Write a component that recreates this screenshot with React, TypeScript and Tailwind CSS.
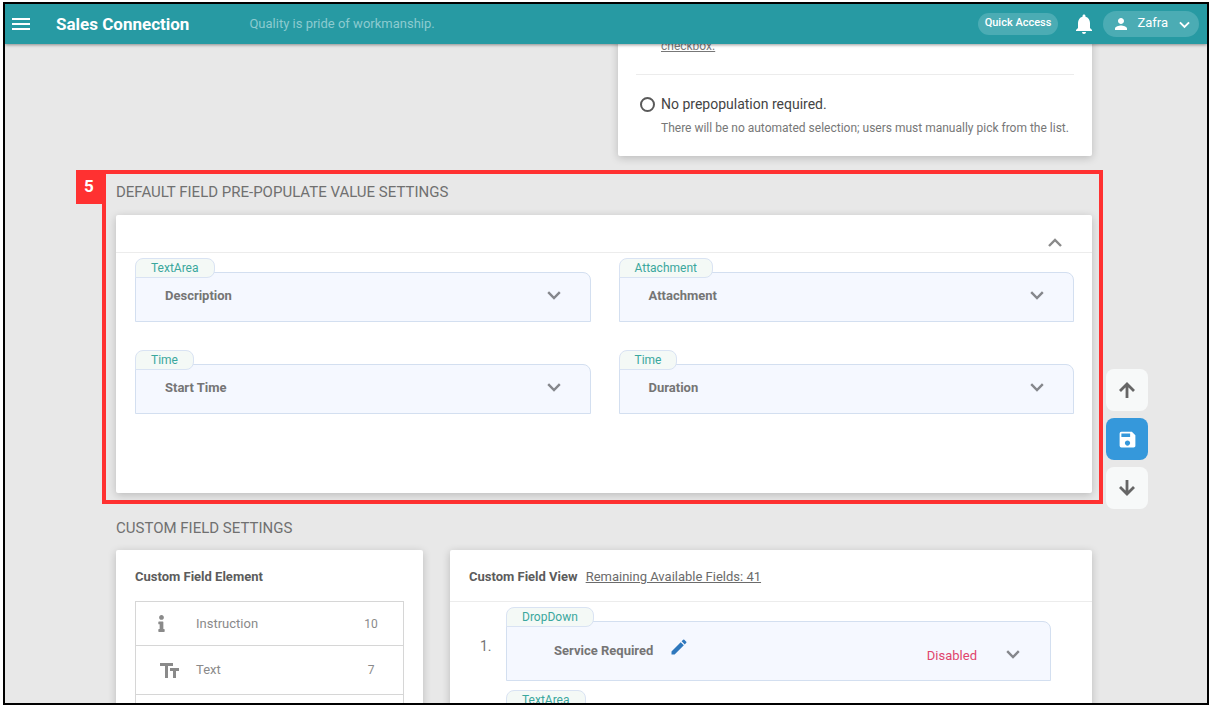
import { FaInfo } from "react-icons/fa";
import { MdEdit, MdNotifications, MdPerson, MdSave } from "react-icons/md";

const defaultFields = [
    { type: "TextArea", name: "Description" },
    { type: "Attachment", name: "Attachment" },
    { type: "Time", name: "Start Time" },
    { type: "Time", name: "Duration" },
];

const elements = [
    { name: "Instruction", count: 10, icon: "info" },
    { name: "Text", count: 7, icon: "text" },
];

function Chevron({ up, className }: { up?: boolean; className?: string }) {
    return (
        <svg viewBox="0 0 14 14" className={className} fill="none" stroke="currentColor" strokeWidth="2.4">
            <path d={up ? "M1 10l6-6 6 6" : "M1.2 4.2L7 10l5.8-5.8"} />
        </svg>
    );
}

function Arrow({ down }: { down?: boolean }) {
    return (
        <svg viewBox="0 0 16 16" className="size-4" fill="none" stroke="currentColor" strokeWidth="2.8">
            <path d={down ? "M8 0v14M1 7l7 7 7-7" : "M8 16V2M1 9l7-7 7 7"} />
        </svg>
    );
}

function TextIcon() {
    return (
        <svg viewBox="2 4 19 15" className="h-[15px] w-[19px]" fill="currentColor">
            <path d="M2 4v3h5v12h3V7h5V4H2zm19 5h-9v3h3v7h3v-7h3V9z" />
        </svg>
    );
}

function TypeTab({ type }: { type: string }) {
    return (
        <span className="relative -mb-[6px] block h-5 w-fit rounded-t-lg rounded-br-lg border border-[#d9e3f3] bg-[#f4f9f6] px-[15px] text-[12px] leading-[18px] text-[#3aa79d]">
            {type}
        </span>
    );
}

function Header() {
    return (
        <header className="relative z-10 flex h-10 shrink-0 items-center bg-[#279aa3] pr-2 pl-[7px] text-white shadow-[0_1px_3px_rgba(0,0,0,0.4)]">
            <button aria-label="Menu" className="flex w-[18px] flex-col gap-[3px]">
                <span className="h-[2px] w-full bg-white" />
                <span className="h-[2px] w-full bg-white" />
                <span className="h-[2px] w-full bg-white" />
            </button>
            <h1 className="ml-[26px] text-[17px] leading-5 font-bold">Sales Connection</h1>
            <p className="ml-[60px] text-[13px] leading-5 text-[#8ccbd0]">Quality is pride of workmanship.</p>

            <button className="ml-auto h-[22px] rounded-full bg-[#4bacb4] px-[7px] pb-[2px] text-[11px] font-medium">
                Quick Access
            </button>
            <button aria-label="Notifications" className="ml-[14px]">
                <MdNotifications className="size-6" />
            </button>
            <button className="ml-[7px] flex h-[26px] items-center rounded-full bg-[#4bacb4] px-[9px] text-[13px]">
                <MdPerson className="size-[18px]" />
                <span className="ml-[7px] pb-[2px]">Zafra</span>
                <Chevron className="ml-[11px] size-[11px]" />
            </button>
        </header>
    );
}

export default function App() {
    return (
        <div className="h-screen bg-white pt-[2px] pr-[3px] pb-[3px] pl-[3px] font-['Roboto',sans-serif]">
            <div className="relative flex h-full flex-col overflow-hidden border-2 border-black bg-[#e8e8e8]">

                <Header />

                <main className="min-h-0 flex-1 overflow-hidden pr-[104px] pl-[97px]">

                    {/* PREPOPULATION OPTIONS */}
                    <div className="-mt-3 mr-[11px] ml-[516px] rounded-xs bg-white px-[18px] pt-[5px] pb-[19px] shadow-[0_2px_8px_rgba(0,0,0,0.2)]">
                        <p className="pb-[19px] pl-[25px] text-[12px] leading-[18px] text-[#777] underline">checkbox.</p>
                        <div className="border-t border-[#ececec] pt-[19px] pl-1">
                            <label className="flex h-5 items-center gap-[6px] text-[14px] text-[#444]">
                                <input
                                    type="radio"
                                    name="prepopulation"
                                    className="size-[15px] appearance-none rounded-full border-2 border-[#5a5a5a] bg-white checked:bg-[#5a5a5a]"
                                />
                                No prepopulation required.
                            </label>
                            <p className="mt-[5px] pl-[21px] text-[12px] leading-[18px] whitespace-nowrap text-[#777]">
                                There will be no automated selection; users must manually pick from the list.
                            </p>
                        </div>
                    </div>

                    {/* DEFAULT FIELDS */}
                    <section className="relative mt-[14px] border-4 border-[#ff3131] pt-2 pr-[7px] pb-[7px] pl-[10px]">
                        <span className="absolute -top-1 -left-[30px] flex h-[34px] w-[26px] items-center justify-center bg-[#ff3131] text-[17px] font-bold text-white">
                            5
                        </span>
                        <h2 className="text-[15px] leading-5 text-[#707070]">DEFAULT FIELD PRE-POPULATE VALUE SETTINGS</h2>
                        <div className="mt-[13px] h-[278px] rounded-xs bg-white shadow-[0_2px_8px_rgba(0,0,0,0.2)]">
                            <div className="flex h-[38px] items-end justify-end border-b border-[#ececec] pr-[30px] pb-[2px]">
                                <button aria-label="Collapse" className="text-[#8a8a8a]">
                                    <Chevron up className="size-[14px]" />
                                </button>
                            </div>
                            <div className="grid grid-cols-2 gap-7 pt-[5px] pr-[18px] pl-[19px]">
                                {defaultFields.map((field) => (
                                    <div key={field.name}>
                                        <TypeTab type={field.type} />
                                        <div className="flex h-[50px] items-center justify-between rounded-t-lg rounded-tl-none border border-[#d3dff0] bg-[#f5f8ff] pr-[29px] pb-[3px] pl-[29px]">
                                            <span className="text-[13px] font-bold text-[#757575]">{field.name}</span>
                                            <button aria-label={`Expand ${field.name}`} className="pb-[2px] text-[#85878c]">
                                                <Chevron className="size-[14px]" />
                                            </button>
                                        </div>
                                    </div>
                                ))}
                            </div>
                        </div>
                    </section>

                    {/* CUSTOM FIELDS */}
                    <section className="pt-[14px] pr-[11px] pl-[14px]">
                        <h2 className="text-[15px] leading-5 text-[#707070]">CUSTOM FIELD SETTINGS</h2>
                        <div className="mt-3 grid grid-cols-[307fr_642fr] gap-[27px]">

                            <div className="rounded-xs bg-white px-[19px] pt-[17px] shadow-[0_2px_8px_rgba(0,0,0,0.2)]">
                                <h3 className="text-[13px] leading-5 font-bold text-[#5c5c5c]">Custom Field Element</h3>
                                <ul className="mt-[14px] border border-[#d6d6d6] pb-12 text-[13px] text-[#8a8a8a]">
                                    {elements.map((el) => (
                                        <li key={el.name} className="flex h-[49px] items-center border-b border-[#d6d6d6] pr-[19px] pl-[15px] first:h-11">
                                            <span className="flex w-[37px] shrink-0 justify-center">
                                                {el.icon === "info" ? <FaInfo className="mr-4 size-[17px]" /> : <TextIcon />}
                                            </span>
                                            <span className="ml-2 grow">{el.name}</span>
                                            <span className="w-[26px] text-center text-[12px]">{el.count}</span>
                                        </li>
                                    ))}
                                </ul>
                            </div>

                            <div className="rounded-xs bg-white shadow-[0_2px_8px_rgba(0,0,0,0.2)]">
                                <div className="flex h-[52px] items-center gap-2 border-b border-[#ececec] pt-[2px] pl-[19px]">
                                    <h3 className="text-[13px] leading-5 font-bold text-[#5c5c5c]">Custom Field View</h3>
                                    <a href="#fields" className="text-[13px] leading-5 text-[#6b6b6b] underline">
                                        Remaining Available Fields: 41
                                    </a>
                                </div>
                                <ol id="fields" className="pt-[5px] pr-[41px] pl-[30px]">
                                    <li className="flex">
                                        <span className="w-[26px] shrink-0 pt-[29px] text-[14px] leading-5 text-[#757575]">1.</span>
                                        <div className="grow">
                                            <TypeTab type="DropDown" />
                                            <div className="flex h-[60px] items-center rounded-t-lg rounded-tl-none border border-[#d3dff0] bg-[#f5f8ff] pr-[30px] pl-[47px]">
                                                <span className="text-[13px] font-bold text-[#757575]">Service Required</span>
                                                <button aria-label="Edit Service Required" className="ml-4 pb-2 text-[#2e78bd]">
                                                    <MdEdit className="size-5" />
                                                </button>
                                                <span className="ml-auto pt-[10px] text-[13px] text-[#e0446c]">Disabled</span>
                                                <button aria-label="Expand Service Required" className="ml-[29px] pt-[6px] text-[#85878c]">
                                                    <Chevron className="size-[14px]" />
                                                </button>
                                            </div>
                                        </div>
                                    </li>
                                    <li className="mt-[9px] pl-[26px]">
                                        <TypeTab type="TextArea" />
                                        <div className="h-[60px] rounded-t-lg rounded-tl-none border border-[#d3dff0] bg-[#f5f8ff]" />
                                    </li>
                                </ol>
                            </div>

                        </div>
                    </section>
                </main>

                {/* FLOATING ACTIONS */}
                <div className="absolute top-[365px] right-[59px] flex flex-col gap-[7px] text-[#666]">
                    <button aria-label="Scroll up" className="flex size-[42px] items-center justify-center rounded-lg bg-[#f7f9f9]">
                        <Arrow />
                    </button>
                    <button aria-label="Save" className="flex size-[42px] items-center justify-center rounded-lg bg-[#3598db] text-white">
                        <MdSave className="size-[21px]" />
                    </button>
                    <button aria-label="Scroll down" className="flex size-[42px] items-center justify-center rounded-lg bg-[#f7f9f9]">
                        <Arrow down />
                    </button>
                </div>

            </div>
        </div>
    );
}
